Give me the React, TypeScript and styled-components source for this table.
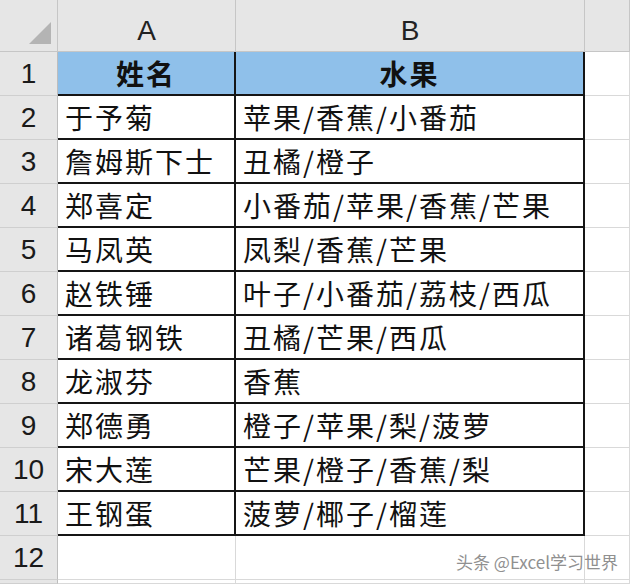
import React from "react";
import styled, { createGlobalStyle } from "styled-components";

const Global = createGlobalStyle`
  html, body { margin: 0; padding: 0; background: #ffffff; }
  body { width: 630px; height: 584px; overflow: hidden; }
`;

const Sheet = styled.div`
  position: relative;
  width: 630px;
  height: 584px;
  display: grid;
  grid-template-columns: 58px 178px 349px 1fr;
  grid-template-rows: 52px repeat(12, 44px) 1fr;
  background: #ffffff;
  overflow: hidden;
`;

const Corner = styled.div`
  background: #e6e6e6;
  border-right: 1px solid #c6c6c6;
  border-bottom: 1px solid #c6c6c6;
  box-sizing: border-box;
  display: flex;
  align-items: flex-end;
  justify-content: flex-end;
  padding: 0 6px 7px 0;
`;

const ColHead = styled.div`
  background: #e6e6e6;
  border-right: 1px solid #c6c6c6;
  border-bottom: 1px solid #c6c6c6;
  box-sizing: border-box;
  display: flex;
  align-items: flex-end;
  justify-content: center;
  padding-bottom: 4px;
  font-family: "Liberation Sans", Arial, sans-serif;
  font-size: 28px;
  color: #222;
`;

const RowHead = styled.div`
  background: #e6e6e6;
  border-right: 1px solid #bdbdbd;
  border-bottom: 1px solid #cfcfcf;
  box-sizing: border-box;
  display: flex;
  align-items: center;
  justify-content: center;
  font-family: "Liberation Sans", Arial, sans-serif;
  font-size: 28px;
  color: #1a1a1a;
`;

const Cell = styled.div<{ $head?: boolean; $boxed?: boolean }>`
  box-sizing: border-box;
  display: flex;
  align-items: center;
  justify-content: ${(p) => (p.$head ? "center" : "flex-start")};
  padding-left: ${(p) => (p.$head ? "0" : "7px")};
  background: ${(p) => (p.$head ? "#8fc0ea" : "#ffffff")};
  border-bottom: ${(p) => (p.$boxed ? "2px solid #151515" : "1px solid #d9d9d9")};
  border-right: ${(p) => (p.$boxed ? "2px solid #151515" : "1px solid #d9d9d9")};
  font-family: "Noto Sans CJK SC", "Microsoft YaHei", sans-serif;
  font-size: 28px;
  font-weight: ${(p) => (p.$head ? 700 : 400)};
  letter-spacing: 2px;
  color: #111;
  white-space: nowrap;
  overflow: hidden;
`;

const Filler = styled.div`
  box-sizing: border-box;
  border-bottom: 1px solid #d9d9d9;
  border-right: 1px solid #d9d9d9;
`;

const Watermark = styled.div`
  position: absolute;
  left: 456px;
  top: 549px;
  font-family: "Noto Sans CJK SC", "Microsoft YaHei", sans-serif;
  font-size: 17px;
  color: #909090;
  text-shadow: 0 0 2px #fff, 0 0 2px #fff;
  white-space: nowrap;
`;

const rows: [string, string][] = [
  ["于予菊", "苹果/香蕉/小番茄"],
  ["詹姆斯下士", "丑橘/橙子"],
  ["郑喜定", "小番茄/苹果/香蕉/芒果"],
  ["马凤英", "凤梨/香蕉/芒果"],
  ["赵铁锤", "叶子/小番茄/荔枝/西瓜"],
  ["诸葛钢铁", "丑橘/芒果/西瓜"],
  ["龙淑芬", "香蕉"],
  ["郑德勇", "橙子/苹果/梨/菠萝"],
  ["宋大莲", "芒果/橙子/香蕉/梨"],
  ["王钢蛋", "菠萝/椰子/榴莲"],
];

export default function App() {
  return (
    <>
      <Global />
      <Sheet>
        <Corner>
          <svg width="22" height="22" viewBox="0 0 22 22">
            <polygon points="22,0 22,22 0,22" fill="#b4b4b4" />
          </svg>
        </Corner>
        <ColHead>A</ColHead>
        <ColHead>B</ColHead>
        <ColHead />

        <RowHead>1</RowHead>
        <Cell $head $boxed>姓名</Cell>
        <Cell $head $boxed>水果</Cell>
        <Filler />

        {rows.map(([name, fruit], i) => (
          <React.Fragment key={i}>
            <RowHead>{i + 2}</RowHead>
            <Cell $boxed>{name}</Cell>
            <Cell $boxed>{fruit}</Cell>
            <Filler />
          </React.Fragment>
        ))}

        <RowHead>12</RowHead>
        <Cell />
        <Cell />
        <Filler />

        <RowHead />
        <Cell />
        <Cell />
        <Filler />
        <Watermark>头条 @Excel学习世界</Watermark>
      </Sheet>
    </>
  );
}
